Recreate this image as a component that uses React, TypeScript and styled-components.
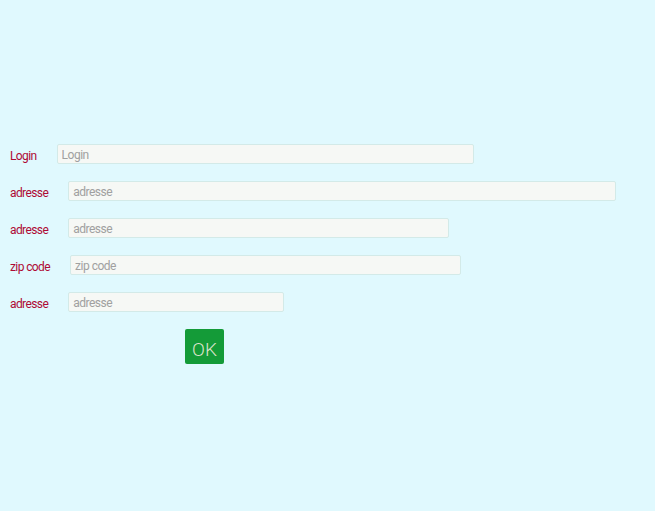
import styled, { createGlobalStyle } from "styled-components";

const GlobalStyle = createGlobalStyle`
  html, body {
    margin: 0;
    background: #e0f9fe;
  }
  body {
    font-family: Roboto, "Liberation Sans", sans-serif;
  }
`;

// one line of the form: label, then its field
interface Field {
  label: string;
  width: number;
}

const fields: Field[] = [
  { label: "Login", width: 417 },
  { label: "adresse", width: 548 },
  { label: "adresse", width: 381 },
  { label: "zip code", width: 391 },
  { label: "adresse", width: 216 },
];

function App() {
  return (
    <>
      <GlobalStyle />
      <Page>
        <Form onSubmit={(e) => e.preventDefault()}>
          {fields.map((f, i) => (
            <Row key={i}>
              <Label>{f.label}</Label>
              <Input placeholder={f.label} $width={f.width} />
            </Row>
          ))}
          <OkButton type="submit">OK</OkButton>
        </Form>
      </Page>
    </>
  );
}

const Page = styled.div`
  width: 655px;
  height: 511px;
  box-sizing: border-box;
  padding: 144px 0 0 10px;
`;

const Form = styled.form`
  display: flex;
  flex-direction: column;
  align-items: flex-start;
  gap: 17px;
`;

const Row = styled.div`
  display: flex;
  align-items: flex-start;
  height: 20px;
`;

const Label = styled.label`
  font-size: 12px;
  line-height: 20px;
  padding-top: 2px;
  letter-spacing: -0.6px;
  color: #ae0a35;
  margin-right: 20px;
`;

const Input = styled.input<{ $width: number }>`
  width: ${(p) => p.$width}px;
  height: 20px;
  box-sizing: border-box;
  border: 1px solid #d3eae8;
  border-radius: 2px;
  background: #f6f8f5;
  padding: 1px 4px 0;
  font-family: Roboto, "Liberation Sans", sans-serif;
  font-size: 12px;
  letter-spacing: -0.5px;
  outline: none;

  &::placeholder {
    color: #a0a0a0;
  }
`;

const OkButton = styled.button`
  margin-left: 175px;
  width: 39px;
  height: 35px;
  border: none;
  border-radius: 2px;
  background: #149b38;
  color: #dbe3cb;
  font-family: Roboto, "Liberation Sans", sans-serif;
  font-size: 19px;
  font-weight: 300;
  padding: 6px 0 0;
  cursor: pointer;
`;

export default App;
